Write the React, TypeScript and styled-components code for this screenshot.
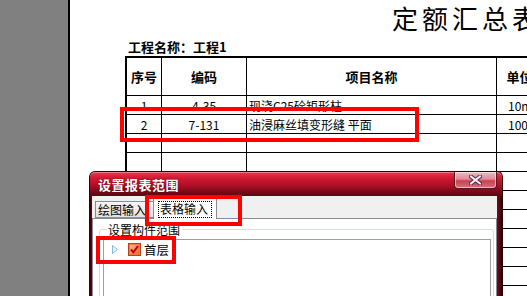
import React from 'react';
import styled, {createGlobalStyle} from 'styled-components';

const GlobalStyle = createGlobalStyle`
  html, body {
    margin: 0;
    padding: 0;
    background: #fff;
  }
  body {
    font-family: "Noto Sans CJK SC", "Liberation Sans", sans-serif;
    color: #000;
  }
`;

const Screen = styled.div`
  position: relative;
  width: 527px;
  height: 296px;
  overflow: hidden;
  display: flex;
`;

const Desk = styled.div`
  flex: none;
  width: 68px;
  background: #808080;
  border-right: 2px solid #000;
`;

const Page = styled.div`
  flex: 1;
  min-width: 0;
  overflow: hidden;
  background: #fff;
  display: flex;
  flex-direction: column;
`;

const Heading = styled.h1`
  margin: 3px 0 0 322px;
  font-size: 26px;
  font-weight: 400;
  line-height: 30px;
  letter-spacing: 4px;
  white-space: nowrap;
`;

const ProjectName = styled.div`
  margin: 7px 0 0 58px;
  font-size: 13px;
  font-weight: 700;
  line-height: 14px;
  white-space: nowrap;
`;

const Sheet = styled.div`
  flex: none;
  align-self: flex-start;
  margin: 2px 0 0 55px;
  display: grid;
  grid-template-columns: 35px 85px 250px 46px 80px;
  grid-template-rows: 38px;
  grid-auto-rows: 19px;
  border-top: 2px solid #000;
  border-left: 2px solid #000;
`;

const Cell = styled.div<{$align?: 'left' | 'center'; $head?: boolean}>`
  box-sizing: border-box;
  border-right: 1px solid #000;
  border-bottom: 1px solid #000;
  display: flex;
  align-items: center;
  justify-content: ${p => (p.$align === 'left' ? 'flex-start' : 'center')};
  padding-left: ${p => (p.$align === 'left' ? '2px' : '0')};
  font-size: ${p => (p.$head ? '13px' : '12px')};
  font-weight: ${p => (p.$head ? 700 : 400)};
  white-space: nowrap;
  overflow: hidden;
`;

const UnitCell = styled(Cell)`
  justify-content: flex-start;
  padding-left: 11px;
`;

/* dialog window lying over the report */
const Dialog = styled.div`
  position: absolute;
  left: 89px;
  top: 171px;
  width: 414px;
  height: 140px;
  box-sizing: border-box;
  display: flex;
  flex-direction: column;
  padding: 0 5px 0 2px;
  background: linear-gradient(90deg, #3c050c, #6a0a16 3px, #6a0a16 calc(100% - 4px), #2a0308);
  border: 1px solid #2a0308;
  border-bottom: none;
  border-radius: 6px 6px 0 0;
`;

const TitleBar = styled.div`
  flex: none;
  height: 24px;
  margin: 0 -5px 0 -2px;
  padding: 0 5px 0 8px;
  border-radius: 5px 5px 0 0;
  display: flex;
  align-items: flex-start;
  justify-content: space-between;
  background: linear-gradient(#e8384f 0%, #d21a34 25%, #b00f26 55%, #7e0a1a 80%, #5a0610 100%);
  box-shadow: inset 0 1px 0 rgba(255, 255, 255, 0.35);
`;

const TitleText = styled.span`
  align-self: center;
  color: #fff;
  font-size: 13px;
  font-weight: 700;
  letter-spacing: 0.5px;
  text-shadow: 0 0 2px rgba(60, 0, 10, 0.6);
`;

const CloseButton = styled.div`
  width: 43px;
  height: 17px;
  box-sizing: border-box;
  display: flex;
  align-items: center;
  justify-content: center;
  border: 1px solid #5a1520;
  border-top: none;
  border-radius: 0 0 4px 4px;
  background: linear-gradient(#efb8c0 0%, #e08a98 45%, #c8404f 55%, #d8707e 100%);
  box-shadow: inset 0 0 0 1px rgba(255, 255, 255, 0.55);
`;

const Body = styled.div`
  flex: 1;
  display: flex;
  flex-direction: column;
  background: #f0f0f0;
`;

const TabStrip = styled.div`
  flex: none;
  height: 22px;
  padding-left: 3px;
  display: flex;
  align-items: flex-end;
`;

const Tab = styled.div<{$active?: boolean}>`
  position: relative;
  box-sizing: border-box;
  height: ${p => (p.$active ? '21px' : '17px')};
  width: ${p => (p.$active ? '64px' : '60px')};
  margin-left: ${p => (p.$active ? '-2px' : '0')};
  margin-bottom: ${p => (p.$active ? '-1px' : '0')};
  z-index: ${p => (p.$active ? 1 : 0)};
  padding: ${p => (p.$active ? '2px 0 0 4px' : '1px 0 0 2px')};
  border: 1px solid #898c95;
  border-bottom: ${p => (p.$active ? 'none' : '1px solid #898c95')};
  background: ${p => (p.$active ? '#fff' : 'linear-gradient(#f6f6f6, #e2e2e2)')};
  font-size: 12px;
  line-height: 14px;
  white-space: nowrap;
`;

const FocusLabel = styled.span`
  display: inline-block;
  padding: 0 3px 1px 1px;
  border: 1px dotted #000;
`;

const Panel = styled.div`
  flex: 1;
  display: flex;
  flex-direction: column;
  background: #fff;
  border: 1px solid #898c95;
  border-bottom: none;
`;

const GroupBox = styled.fieldset`
  flex: 1;
  margin: 4px 2px 0 6px;
  padding: 0 2px 0 3px;
  border: 1px solid #d5dfe5;
  border-bottom: none;
  border-radius: 3px 3px 0 0;
  display: flex;
  flex-direction: column;
  min-width: 0;
`;

const Legend = styled.legend`
  margin-left: 4px;
  padding: 0 2px 0 1px;
  font-size: 12px;
  line-height: 13px;
  color: #000;
`;

const TreeBox = styled.div`
  flex: 1;
  margin-top: 3px;
  border: 1px solid #a0a0a0;
  border-bottom: none;
  background: #fff;
`;

const TreeItem = styled.div`
  display: flex;
  align-items: center;
  height: 15px;
  padding: 2px 0 0 8px;
`;

const Expander = styled.svg`
  flex: none;
  margin-right: 10px;
`;

const Check = styled.svg`
  flex: none;
  margin-right: 3px;
`;

const NodeLabel = styled.span`
  font-size: 12.5px;
  line-height: 14px;
  white-space: nowrap;
`;

/* red annotation rectangles drawn over the screenshot */
const Marker = styled.div<{$x: number; $y: number; $w: number; $h: number}>`
  position: absolute;
  left: ${p => p.$x}px;
  top: ${p => p.$y}px;
  width: ${p => p.$w}px;
  height: ${p => p.$h}px;
  box-sizing: border-box;
  border: 4px solid #ff0000;
  z-index: 5;
`;

type Row = {no: string; code: string; name: string; unit: string};

const rows: Row[] = [
  {no: '1', code: '4-35', name: '现浇C25砼矩形柱', unit: '10m³'},
  {no: '2', code: '7-131', name: '油浸麻丝填变形缝 平面', unit: '100m'},
  ...Array.from({length: 9}, () => ({no: '', code: '', name: '', unit: ''})),
];

const CloseGlyph = () => (
  <svg width="13" height="10" viewBox="0 0 13 10">
    <path d="M2 1.5 L11 8.5 M11 1.5 L2 8.5" stroke="#4a2a3a" strokeWidth="4" strokeLinecap="square" />
    <path d="M2 1.5 L11 8.5 M11 1.5 L2 8.5" stroke="#f4eef6" strokeWidth="2" strokeLinecap="square" />
  </svg>
);

export default function App() {
  return (
    <Screen>
      <GlobalStyle />
      <Desk />
      <Page>
        <Heading>定额汇总表</Heading>
        <ProjectName>工程名称：工程1</ProjectName>
        <Sheet>
          <Cell $head>序号</Cell>
          <Cell $head>编码</Cell>
          <Cell $head>项目名称</Cell>
          <Cell $head>单位</Cell>
          <Cell $head />
          {rows.map((row, i) => (
            <React.Fragment key={i}>
              <Cell>{row.no}</Cell>
              <Cell>{row.code}</Cell>
              <Cell $align="left">{row.name}</Cell>
              <UnitCell>{row.unit}</UnitCell>
              <Cell />
            </React.Fragment>
          ))}
        </Sheet>
      </Page>

      <Dialog>
        <TitleBar>
          <TitleText>设置报表范围</TitleText>
          <CloseButton>
            <CloseGlyph />
          </CloseButton>
        </TitleBar>
        <Body>
          <TabStrip>
            <Tab>绘图输入</Tab>
            <Tab $active>
              <FocusLabel>表格输入</FocusLabel>
            </Tab>
          </TabStrip>
          <Panel>
            <GroupBox>
              <Legend>设置构件范围</Legend>
              <TreeBox>
                <TreeItem>
                  <Expander width="6" height="9" viewBox="0 0 6 9">
                    <path d="M0.5 0.5 L5.5 4.5 L0.5 8.5 Z" fill="#eaf5fd" stroke="#80bce8" strokeWidth="1" />
                  </Expander>
                  <Check width="13" height="13" viewBox="0 0 13 13">
                    <defs>
                      <linearGradient id="cb" x1="0" y1="0" x2="1" y2="1">
                        <stop offset="0" stopColor="#fbb890" />
                        <stop offset="1" stopColor="#ec6a34" />
                      </linearGradient>
                    </defs>
                    <rect x="0.5" y="0.5" width="12" height="12" fill="#f07a40" stroke="#b5441a" />
                    <rect x="2" y="2" width="9" height="9" fill="url(#cb)" />
                    <path d="M3 6.5 L5.3 9.3 L10 3" fill="none" stroke="#cc0000" strokeWidth="2" />
                  </Check>
                  <NodeLabel>首层</NodeLabel>
                </TreeItem>
              </TreeBox>
            </GroupBox>
          </Panel>
        </Body>
      </Dialog>

      <Marker $x={120} $y={107} $w={299} $h={35} />
      <Marker $x={145} $y={195} $w={97} $h={31} />
      <Marker $x={96} $y={236} $w={80} $h={28} />
    </Screen>
  );
}
